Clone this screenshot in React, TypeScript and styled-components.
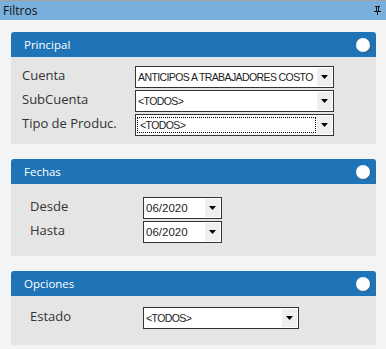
import styled, { createGlobalStyle } from "styled-components";

const GlobalStyle = createGlobalStyle`
    html, body {
        margin: 0;
        padding: 0;
        background: #f4f4f4;
    }
    body {
        font-family: "Open Sans", "Noto Sans", sans-serif;
        width: 386px;
        height: 349px;
        overflow: hidden;
    }
`;

interface Field {
    label: string;
    value: string;
    width: number;
    focused?: boolean;
    wide?: boolean;
}

interface Group {
    title: string;
    labelWidth: number;
    labelIndent: number;
    padTop: number;
    padBottom: number;
    fields: Field[];
}

const groups: Group[] = [
    {
        title: "Principal",
        labelWidth: 113,
        labelIndent: 11,
        padTop: 9,
        padBottom: 8,
        fields: [
            { label: "Cuenta", value: "ANTICIPOS A TRABAJADORES COSTO", width: 199 },
            { label: "SubCuenta", value: "<TODOS>", width: 199 },
            { label: "Tipo de Produc.", value: "<TODOS>", width: 199, focused: true },
        ],
    },
    {
        title: "Fechas",
        labelWidth: 113,
        labelIndent: 19,
        padTop: 13,
        padBottom: 13,
        fields: [
            { label: "Desde", value: "06/2020", width: 79, wide: true },
            { label: "Hasta", value: "06/2020", width: 79, wide: true },
        ],
    },
    {
        title: "Opciones",
        labelWidth: 113,
        labelIndent: 19,
        padTop: 11,
        padBottom: 16,
        fields: [{ label: "Estado", value: "<TODOS>", width: 156 }],
    },
];

const PinIcon = () => (
    <svg width="7" height="9" viewBox="0 0 7 9">
        <rect x="1" y="0" width="5" height="1" fill="#111" />
        <rect x="2" y="1" width="1" height="4" fill="#111" />
        <rect x="4" y="1" width="1" height="4" fill="#111" />
        <rect x="0" y="5" width="7" height="1" fill="#111" />
        <rect x="3" y="6" width="1" height="3" fill="#111" />
    </svg>
);

const ArrowIcon = () => (
    <svg width="7" height="4" viewBox="0 0 7 4">
        <path d="M0 0 H7 L3.5 4 Z" fill="#000" />
    </svg>
);

export default function App() {
    return (
        <>
            <GlobalStyle />
            <Window>
                <TitleBar>
                    <Title>Filtros</Title>
                    <PinIcon />
                </TitleBar>
                <Content>
                    {groups.map((g) => (
                        <Panel key={g.title}>
                            <PanelHeader>
                                <PanelTitle>{g.title}</PanelTitle>
                                <Toggle />
                            </PanelHeader>
                            <PanelBody padTop={g.padTop} padBottom={g.padBottom}>
                                {g.fields.map((f) => (
                                    <Row key={f.label} indent={g.labelIndent} labelWidth={g.labelWidth}>
                                        <Label>{f.label}</Label>
                                        <Select style={{ width: f.width }}>
                                            <SelectText focused={!!f.focused} wide={!!f.wide}>
                                                {f.value}
                                            </SelectText>
                                            <ArrowBox>
                                                <ArrowIcon />
                                            </ArrowBox>
                                        </Select>
                                    </Row>
                                ))}
                            </PanelBody>
                        </Panel>
                    ))}
                </Content>
            </Window>
        </>
    );
}

const Window = styled.div`
    width: 386px;
    height: 349px;
    display: flex;
    flex-direction: column;
    background: #f4f4f4;
`;

const TitleBar = styled.div`
    height: 19px;
    border-top: 1px solid #a3a3a3;
    background: #79afdc;
    display: flex;
    align-items: center;
    justify-content: space-between;
    padding: 0 5px 0 3px;
`;

const Title = styled.span`
    font-size: 12px;
    color: #111;
    line-height: 19px;
`;

const Content = styled.div`
    display: flex;
    flex-direction: column;
    gap: 15px;
    padding: 12px 10px 0 11px;
`;

const Panel = styled.div`
    display: flex;
    flex-direction: column;
`;

const PanelHeader = styled.div`
    height: 25px;
    background: #1e74b7;
    border-radius: 3px 3px 0 0;
    display: flex;
    align-items: center;
    justify-content: space-between;
    padding: 0 6px 0 13px;
`;

const PanelTitle = styled.span`
    font-size: 11.5px;
    color: #ffffff;
`;

const Toggle = styled.span`
    width: 14px;
    height: 14px;
    border-radius: 50%;
    background: #ffffff;
    box-shadow: 1px 1px 1px rgba(80, 80, 80, 0.5);
`;

const PanelBody = styled.div<{ padTop: number; padBottom: number }>`
    background: #e5e5e5;
    padding: ${({ padTop, padBottom }) => `${padTop}px 0 ${padBottom}px`};
    display: flex;
    flex-direction: column;
    gap: 2px;
`;

const Row = styled.div<{ indent: number; labelWidth: number }>`
    display: grid;
    grid-template-columns: ${({ labelWidth }) => labelWidth}px auto;
    padding-left: ${({ indent }) => indent}px;
    align-items: center;
`;

const Label = styled.span`
    font-size: 13px;
    color: #333;
    line-height: 18px;
    margin-top: -4px;
`;

const Select = styled.div`
    height: 22px;
    box-sizing: border-box;
    border: 1px solid #333;
    background: #fff;
    display: flex;
    align-items: stretch;
`;

const SelectText = styled.span<{ focused: boolean; wide: boolean }>`
    flex: 1;
    margin: 2px 1px 2px 1px;
    padding-left: ${({ focused }) => (focused ? "2px" : "0")};
    font-family: "Liberation Sans", Arial, sans-serif;
    font-size: ${({ wide }) => (wide ? "11.5px" : "10.5px")};
    letter-spacing: ${({ wide }) => (wide ? "0" : "-0.6px")};
    color: #222;
    display: flex;
    align-items: center;
    border: 1px dotted ${({ focused }) => (focused ? "#000" : "transparent")};
    white-space: nowrap;
    overflow: hidden;
`;

const ArrowBox = styled.span`
    width: 15px;
    margin: 1px 1px 1px 0;
    background: #efefef;
    display: flex;
    align-items: center;
    justify-content: center;
`;
